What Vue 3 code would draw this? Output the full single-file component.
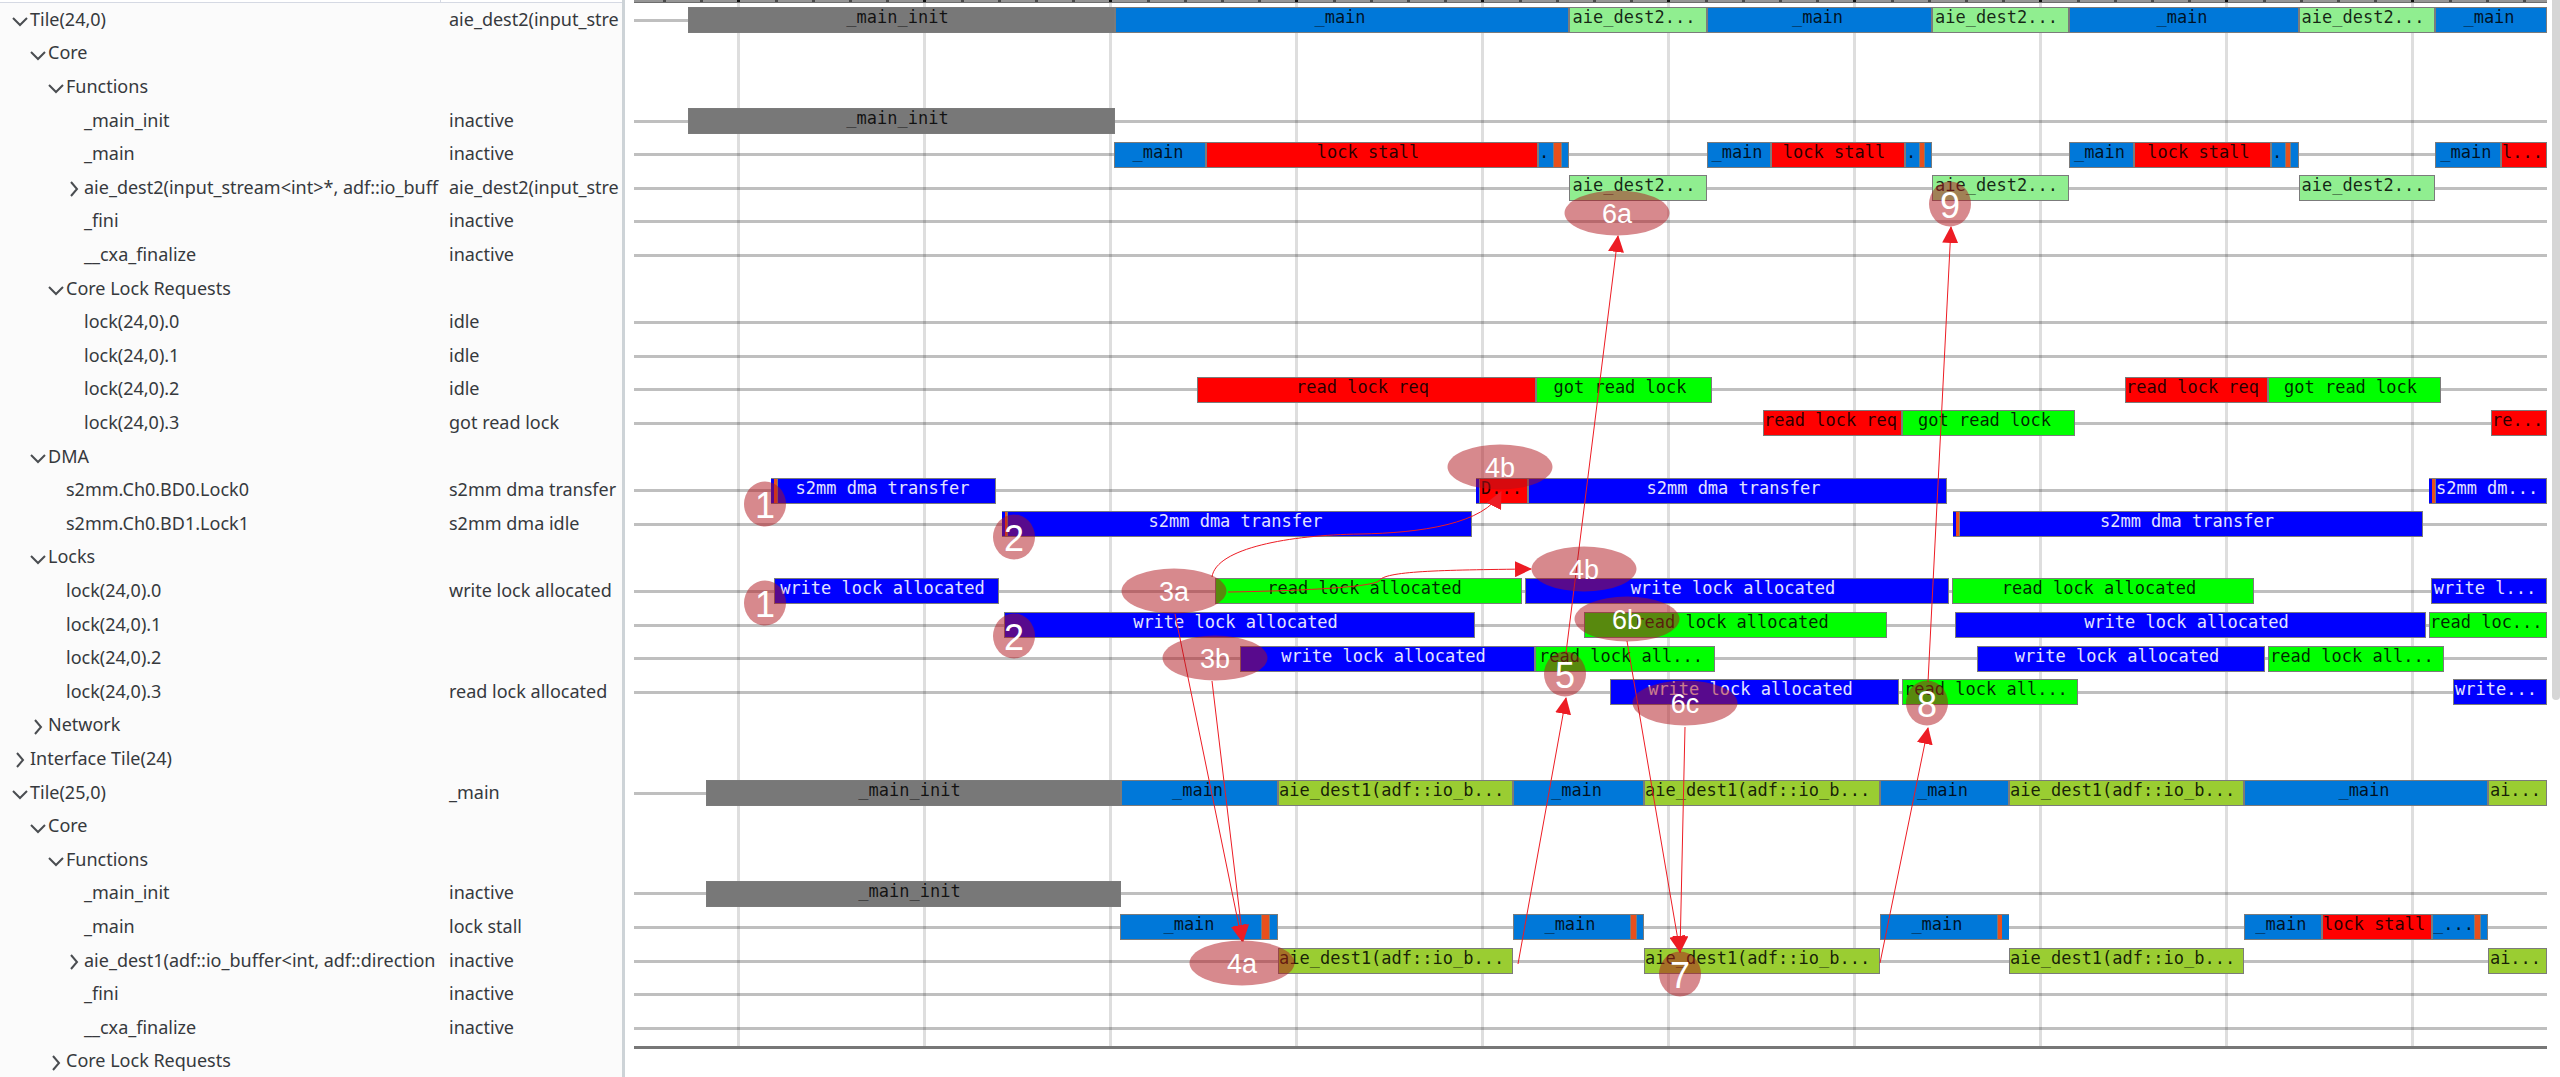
<script setup>
const START = 634
const END = 2547
const SPAN = END - START
const pct = (v) => `${(v / SPAN) * 100}%`

// kind: open / closed / undefined (leaf)
// bars: [from, to, colour, label]
const rows = [
  { name: 'Tile(24,0)', level: 0, kind: 'open', value: 'aie_dest2(input_stre', bars: [
    [688, 1115, 'gray', '_main_init'], [1115, 1569, 'sky', '_main'], [1569, 1707, 'mint', 'aie_dest2...'],
    [1707, 1932, 'sky', '_main'], [1932, 2069, 'mint', 'aie_dest2...'], [2069, 2299, 'sky', '_main'],
    [2299, 2435, 'mint', 'aie_dest2...'], [2435, 2547, 'sky', '_main']] },
  { name: 'Core', level: 1, kind: 'open' },
  { name: 'Functions', level: 2, kind: 'open' },
  { name: '_main_init', level: 3, value: 'inactive', bars: [[688, 1115, 'gray', '_main_init']] },
  { name: '_main', level: 3, value: 'inactive', bars: [
    [1114, 1206, 'sky', '_main'], [1206, 1538, 'red', 'lock stall'], [1538, 1554, 'sky', '.'], [1554, 1561, 'orange'], [1561, 1569, 'sky'],
    [1707, 1771, 'sky', '_main'], [1771, 1905, 'red', 'lock stall'], [1905, 1920, 'sky', '.'], [1920, 1924, 'orange'], [1924, 1932, 'sky'],
    [2069, 2134, 'sky', '_main'], [2134, 2271, 'red', 'lock stall'], [2271, 2286, 'sky', '.'], [2286, 2290, 'orange'], [2290, 2299, 'sky'],
    [2435, 2501, 'sky', '_main'], [2501, 2547, 'red', 'l...']] },
  { name: 'aie_dest2(input_stream<int>*, adf::io_buff', level: 3, kind: 'closed', value: 'aie_dest2(input_stre', bars: [
    [1569, 1707, 'mint', 'aie_dest2...'], [1932, 2069, 'mint', 'aie_dest2...'], [2299, 2435, 'mint', 'aie_dest2...']] },
  { name: '_fini', level: 3, value: 'inactive', bars: [] },
  { name: '__cxa_finalize', level: 3, value: 'inactive', bars: [] },
  { name: 'Core Lock Requests', level: 2, kind: 'open' },
  { name: 'lock(24,0).0', level: 3, value: 'idle', bars: [] },
  { name: 'lock(24,0).1', level: 3, value: 'idle', bars: [] },
  { name: 'lock(24,0).2', level: 3, value: 'idle', bars: [
    [1197, 1536, 'red', 'read lock req'], [1536, 1712, 'green', 'got read lock'],
    [2125, 2268, 'red', 'read lock req'], [2268, 2441, 'green', 'got read lock']] },
  { name: 'lock(24,0).3', level: 3, value: 'got read lock', bars: [
    [1763, 1902, 'red', 'read lock req'], [1902, 2075, 'green', 'got read lock'], [2491, 2547, 'red', 're...']] },
  { name: 'DMA', level: 1, kind: 'open' },
  { name: 's2mm.Ch0.BD0.Lock0', level: 2, value: 's2mm dma transfer', bars: [
    [771, 774, 'blue'], [774, 777, 'orange'], [777, 996, 'blue', 's2mm dma transfer'],
    [1476, 1479, 'blue'], [1479, 1528, 'red', 'D...'], [1528, 1947, 'blue', 's2mm dma transfer'],
    [2429, 2432, 'blue'], [2432, 2435, 'orange'], [2435, 2547, 'blue', 's2mm dm...']] },
  { name: 's2mm.Ch0.BD1.Lock1', level: 2, value: 's2mm dma idle', bars: [
    [1002, 1005, 'blue'], [1005, 1007, 'orange'], [1007, 1472, 'blue', 's2mm dma transfer'],
    [1953, 1956, 'blue'], [1956, 1959, 'orange'], [1959, 2423, 'blue', 's2mm dma transfer']] },
  { name: 'Locks', level: 1, kind: 'open' },
  { name: 'lock(24,0).0', level: 2, value: 'write lock allocated', bars: [
    [774, 999, 'blue', 'write lock allocated'], [1215, 1522, 'green', 'read lock allocated'],
    [1525, 1949, 'blue', 'write lock allocated'], [1952, 2254, 'green', 'read lock allocated'], [2431, 2547, 'blue', 'write l...']] },
  { name: 'lock(24,0).1', level: 2, bars: [
    [1004, 1475, 'blue', 'write lock allocated'], [1584, 1887, 'green', 'read lock allocated'],
    [1955, 2426, 'blue', 'write lock allocated'], [2429, 2547, 'green', 'read loc...']] },
  { name: 'lock(24,0).2', level: 2, bars: [
    [1240, 1535, 'blue', 'write lock allocated'], [1535, 1715, 'green', 'read lock all...'],
    [1977, 2265, 'blue', 'write lock allocated'], [2268, 2444, 'green', 'read lock all...']] },
  { name: 'lock(24,0).3', level: 2, value: 'read lock allocated', bars: [
    [1610, 1899, 'blue', 'write lock allocated'], [1902, 2078, 'green', 'read lock all...'], [2453, 2547, 'blue', 'write...']] },
  { name: 'Network', level: 1, kind: 'closed' },
  { name: 'Interface Tile(24)', level: 0, kind: 'closed' },
  { name: 'Tile(25,0)', level: 0, kind: 'open', value: '_main', bars: [
    [706, 1121, 'gray', '_main_init'], [1121, 1278, 'sky', '_main'], [1278, 1513, 'lime', 'aie_dest1(adf::io_b...'],
    [1513, 1644, 'sky', '_main'], [1644, 1880, 'lime', 'aie_dest1(adf::io_b...'], [1880, 2009, 'sky', '_main'],
    [2009, 2244, 'lime', 'aie_dest1(adf::io_b...'], [2244, 2488, 'sky', '_main'], [2488, 2547, 'lime', 'ai...']] },
  { name: 'Core', level: 1, kind: 'open' },
  { name: 'Functions', level: 2, kind: 'open' },
  { name: '_main_init', level: 3, value: 'inactive', bars: [[706, 1121, 'gray', '_main_init']] },
  { name: '_main', level: 3, value: 'lock stall', bars: [
    [1120, 1262, 'sky', '_main'], [1262, 1269, 'orange'], [1269, 1278, 'sky'],
    [1513, 1631, 'sky', '_main'], [1631, 1636, 'orange'], [1636, 1644, 'sky'],
    [1880, 1998, 'sky', '_main'], [1998, 2002, 'orange'], [2002, 2009, 'sky'],
    [2244, 2322, 'sky', '_main'], [2322, 2432, 'red', 'lock stall'], [2432, 2475, 'sky', '_...'], [2475, 2480, 'orange'], [2480, 2488, 'sky']] },
  { name: 'aie_dest1(adf::io_buffer<int, adf::direction', level: 3, kind: 'closed', value: 'inactive', bars: [
    [1278, 1513, 'lime', 'aie_dest1(adf::io_b...'], [1644, 1880, 'lime', 'aie_dest1(adf::io_b...'],
    [2009, 2244, 'lime', 'aie_dest1(adf::io_b...'], [2488, 2547, 'lime', 'ai...']] },
  { name: '_fini', level: 3, value: 'inactive', bars: [] },
  { name: '__cxa_finalize', level: 3, value: 'inactive', bars: [] },
  { name: 'Core Lock Requests', level: 2, kind: 'closed' },
]

// Each bar follows the previous one, separated by the idle time between them.
const barStyle = (bars, i) => {
  const previousEnd = i ? bars[i - 1][1] : START
  return { marginLeft: pct(bars[i][0] - previousEnd), width: pct(bars[i][1] - bars[i][0]) }
}

const ticks = Array.from({ length: 51 }, (_, i) => ({ x: 663 + i * 37.2, major: i % 5 === 2 }))
const gridLines = ticks.filter((t) => t.major)

const badges = [
  ['6a', 1617, 213], ['9', 1950, 204], ['4b', 1500, 467], ['4b', 1584, 569],
  ['6b', 1627, 619], ['5', 1565, 674], ['6c', 1685, 703], ['8', 1927, 703],
  ['1', 765, 504], ['2', 1014, 537], ['1', 765, 603], ['2', 1014, 636],
  ['3a', 1174, 591], ['3b', 1215, 658], ['4a', 1242, 963], ['7', 1680, 974],
]

const arrows = [
  'M1175 614L1242 941', 'M1212 681L1243 941',
  'M1212 577C1216 548 1290 535 1360 534C1420 533 1485 524 1501 492',
  'M1228 592C1290 591 1368 588 1379 581C1384 571 1440 570 1531 569',
  'M1566 653L1618 236', 'M1518 964L1566 698', 'M1627 641L1680 952',
  'M1685 727L1680 952', 'M1928 682L1951 227', 'M1880 963L1928 728',
]
</script>

<template>
  <main class="viewer">
    <section class="tree" aria-label="Signals">
      <div class="tree-head"><span></span></div>
      <table>
        <colgroup><col class="col-name"><col></colgroup>
        <tbody>
          <tr v-for="(row, i) in rows" :key="i" class="row">
            <td>
              <div class="name" :class="'level-' + row.level">
                <button v-if="row.kind" type="button" :aria-label="'Toggle ' + row.name" :aria-expanded="row.kind === 'open'">
                  <svg viewBox="0 0 18 20" width="18" height="20" aria-hidden="true">
                    <path v-if="row.kind === 'open'" d="M1 9L8 16L15 9" />
                    <path v-else d="M5 5L11 12L5 19" />
                  </svg>
                </button>
                <span v-else class="no-toggle"></span>
                <span>{{ row.name }}</span>
              </div>
            </td>
            <td><div class="value">{{ row.value }}</div></td>
          </tr>
        </tbody>
      </table>
    </section>

    <section class="chart" aria-label="Timeline">
      <div class="ruler">
        <i v-for="t in ticks" :key="t.x" :class="{ major: t.major }" :style="{ left: pct(t.x - START) }"></i>
      </div>
      <div class="grid">
        <i v-for="g in gridLines" :key="g.x" :style="{ left: pct(g.x - START) }"></i>
      </div>
      <div class="tracks">
        <div v-for="(row, i) in rows" :key="i" class="row track" :class="{ lined: row.bars, last: i === rows.length - 1 }">
          <div
            v-for="(bar, b) in row.bars"
            :key="b"
            class="bar"
            :class="[bar[2], { thin: bar[1] - bar[0] < 8, medium: bar[3] && bar[3].length > 5, long: bar[3] && bar[3].length > 20 }]"
            :style="barStyle(row.bars, b)"
          ><span v-if="bar[3]">{{ bar[3] }}</span></div>
        </div>
      </div>
      <svg class="arrows" viewBox="634 0 1913 1077" preserveAspectRatio="none" aria-hidden="true">
        <defs>
          <marker id="head" markerUnits="userSpaceOnUse" markerWidth="17" markerHeight="16" refX="16" refY="8" orient="auto">
            <path d="M0 0L17 8L0 16Z" />
          </marker>
        </defs>
        <path v-for="d in arrows" :key="d" class="arrow" :d="d" marker-end="url(#head)" />
      </svg>
      <div
        v-for="(badge, i) in badges"
        :key="i"
        class="badge"
        :class="{ wide: badge[0].length > 1 }"
        :style="{ left: pct(badge[1] - START), top: badge[2] + 'px' }"
      >{{ badge[0] }}</div>
    </section>

    <div class="scroll"><div class="thumb"></div></div>
  </main>
</template>

<style>
body { margin: 0; background: #fff; }
</style>

<style scoped>
.viewer { display: flex; height: 100vh; overflow: hidden; background: #fff; }

.row { height: 34px; }
.row:nth-child(5n + 2), .row:nth-child(5n) { height: 33px; }

.tree {
  box-sizing: border-box;
  flex: 0 0 625px;
  border-right: 3px solid #cdd3d7;
  background: #fbfbfb;
  color: #36393d;
  font: 18px/31px "Noto Sans", "Open Sans", sans-serif;
}
.tree-head { height: 2px; border-bottom: 1px solid #d5d9e3; background: #fff; }
.tree-head span { display: block; width: 440px; height: 2px; border-right: 1px solid #d5d9e3; }
table { width: 100%; table-layout: fixed; border-collapse: collapse; }
.col-name { width: 441px; }
td { padding: 0; height: inherit; vertical-align: middle; }
.name, .value { box-sizing: border-box; height: 33px; padding-bottom: 2px; white-space: nowrap; }
.name { display: flex; align-items: center; }
.value { padding-left: 8px; }
.level-0 { padding-left: 12px; }
.level-1 { padding-left: 30px; }
.level-2 { padding-left: 48px; }
.level-3 { padding-left: 66px; }
button { flex: none; width: 18px; height: 20px; padding: 0; border: 0; background: none; }
button svg { display: block; fill: none; stroke: #4a4d51; stroke-width: 2; }
.no-toggle { flex: none; width: 18px; }

.chart { position: relative; flex: 1; min-width: 0; margin-left: 9px; }
.ruler { position: relative; box-sizing: border-box; height: 3px; border-bottom: 1px solid #6e6e6e; background: #969696; }
.ruler i { position: absolute; top: 0; width: 3px; height: 2px; background: #4a4a4a; }
.ruler i.major { background: #111; }
.grid i { position: absolute; top: 3px; width: 3px; height: 1044px; background: #dedede; }
.tracks { position: relative; }
.track { display: flex; align-items: center; }
.lined { background: linear-gradient(rgba(0, 0, 0, 0.25), rgba(0, 0, 0, 0.25)) center / 100% 3px no-repeat; }
.last { box-sizing: border-box; background: linear-gradient(#777, #777) 0 1px / 100% 3px no-repeat; }
.bar {
  box-sizing: border-box;
  flex: none;
  height: 26px;
  overflow: hidden;
  border: 1px solid #7b7b7b;
  color: rgba(0, 0, 0, 0.85);
  font: 17px/18px "DejaVu Sans Mono", monospace;
  text-align: center;
  white-space: nowrap;
}
.bar span { display: inline-block; margin-right: 4px; }
.bar.medium span { margin-right: 8px; }
.bar.long span { margin-right: 12px; }
.bar.thin { border-width: 1px 0; }
.gray { background: #787878; }
.sky { background: #0078d9; }
.mint { background: #90ee90; }
.red { background: #f00; }
.green { background: #0f0; }
.blue { background: #00f; color: #e4e4ff; }
.lime { background: #9acd32; }
.orange { background: #e8501c; }

.arrows { position: absolute; top: 0; left: 0; width: 100%; height: 1077px; }
.arrow { fill: none; stroke: #ed1c24; stroke-width: 1; }
.arrows marker path { fill: #ed1c24; }
.badge {
  position: absolute;
  width: 42px;
  height: 45px;
  border-radius: 50%;
  transform: translate(-50%, -50%);
  background: rgba(176, 20, 28, 0.5);
  color: #fff;
  font: 36px/47px "Liberation Sans", sans-serif;
  text-align: center;
}
.badge.wide { width: 105px; font-size: 27px; }

.scroll { flex: 0 0 8px; margin-left: 5px; }
.thumb { height: 65vh; border-radius: 0 0 4px 4px; background: #d6d6d6; }
</style>
